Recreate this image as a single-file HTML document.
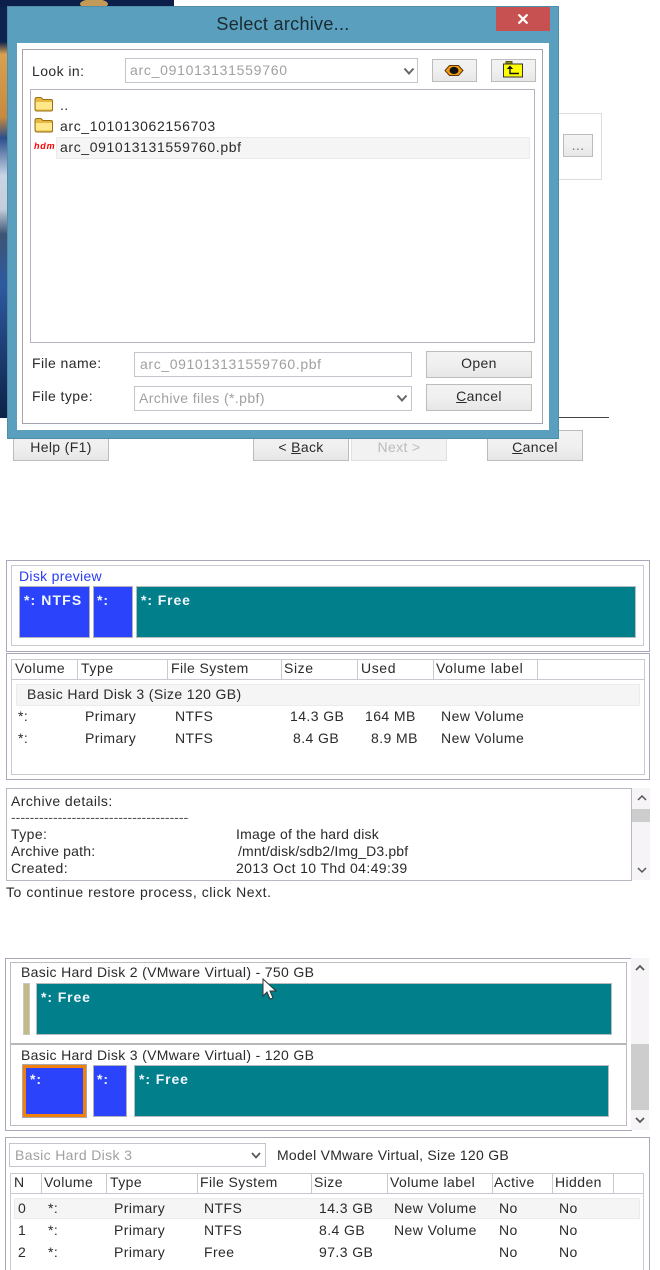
<!DOCTYPE html>
<html><head><meta charset="utf-8">
<style>
html,body{margin:0;padding:0;background:#fff}
#p{position:relative;width:660px;height:1270px;overflow:hidden;background:#fff;font-family:"Liberation Sans",sans-serif;color:#2a2a2a;font-size:14px;filter:blur(.3px)}
#p div,#p svg{position:absolute;box-sizing:border-box}
.t{white-space:nowrap;line-height:16px;height:16px;letter-spacing:.42px;margin-top:-1px}
.g{color:#a0a0a0}
.b{border:1px solid #b4b4c0;background:#fff}
.f{border:1px solid #c4c4cc;background:#fff}
.bt{border:1px solid #bcbcbc;background:linear-gradient(#f2f2f2,#f0f0f0 50%,#e6e6e6);text-align:center;line-height:20px;white-space:nowrap;letter-spacing:.35px}
.o{border:1px solid #a9a9ba;background:#fff}
.in{border:1px solid #c9c9d0;background:#fff}
.blue{background:#2a43fb;border:1px solid #b0b0b8}
.teal{background:#017f8a;border:1px solid #b8bcc0}
.w{color:#f2f6ff;font-weight:bold;letter-spacing:.9px;font-size:14px}
.sep{width:1px;background:#c9c9d2}
.h{letter-spacing:.6px}
u{text-decoration:underline}
</style></head><body><div id="p">

<svg style="left:0;top:0" width="174" height="418" viewBox="0 0 174 418">
<defs><linearGradient id="s" x1="0" y1="0" x2="0" y2="1"><stop offset="0" stop-color="#0d2450"/><stop offset=".1" stop-color="#0d2450"/><stop offset=".13" stop-color="#d8a050"/><stop offset=".28" stop-color="#c88a3c"/><stop offset=".33" stop-color="#2c4f8c"/><stop offset=".42" stop-color="#c8d4e4"/><stop offset=".5" stop-color="#c4cedc"/><stop offset=".56" stop-color="#3f5474"/><stop offset=".68" stop-color="#2e5aa0"/><stop offset=".85" stop-color="#1c3c70"/><stop offset="1" stop-color="#0c2248"/></linearGradient></defs>
<rect width="174" height="418" fill="url(#s)"/>
<rect width="174" height="7" fill="#0c1f4a"/>
<ellipse cx="94" cy="4" rx="14" ry="5" fill="#c49a58"/>
</svg>

<div class="f" style="left:540px;top:113px;width:62px;height:67px;border-color:#dcdcdc"></div>
<div class="bt" style="left:563px;top:134px;width:30px;height:23px;color:#777">...</div>
<div style="left:550px;top:417px;width:59px;height:1px;background:#444"></div>

<div class="bt" style="left:13px;top:430px;width:96px;height:31px;line-height:32px">Help (F1)</div>
<div class="bt" style="left:253px;top:430px;width:96px;height:31px;line-height:32px">&lt; <u>B</u>ack</div>
<div class="bt" style="left:351px;top:430px;width:96px;height:31px;line-height:32px;color:#bbb;background:#f2f2f2;border-color:#e0e0e0">Next &gt;</div>
<div class="bt" style="left:487px;top:430px;width:96px;height:31px;line-height:32px"><u>C</u>ancel</div>

<div style="left:7px;top:6px;width:552px;height:433px;background:#5aa0be;border:1px solid #4e8ea8"></div>
<div class="t" style="left:183px;top:14px;margin-top:0;width:200px;text-align:center;font-size:18px;height:20px;line-height:20px;color:#1a2a30;letter-spacing:.3px">Select archive...</div>
<div style="left:496px;top:7px;width:54px;height:24px;background:#c75050"></div>
<svg style="left:517px;top:14px" width="12" height="10" viewBox="0 0 12 10"><path d="M1.500 .5 10.500 9.500M10.500 .5 1.500 9.500" stroke="#fff" stroke-width="2.200" fill="none"/></svg>
<div style="left:17px;top:43px;width:532px;height:387px;background:#fff"></div>
<div style="left:22px;top:49px;width:521px;height:375px;border:1px solid #a4a4b0;background:#fff"></div>

<div class="t" style="left:32px;top:64px">Look in:</div>
<div class="f" style="left:125px;top:58px;width:293px;height:25px"></div>
<div class="t g" style="left:130px;top:63px;letter-spacing:.72px">arc_091013131559760</div>
<svg style="left:403px;top:67px" width="12" height="9" viewBox="0 0 12 9"><path d="M1.500 1.500 6 6.500 10.500 1.500" stroke="#666" stroke-width="2" fill="none"/></svg>

<div class="bt" style="left:432px;top:59px;width:45px;height:23px"></div>
<svg style="left:444px;top:64px" width="20" height="13" viewBox="0 0 20 13"><path d="M1 6.500 5.500 1.500H14.500L19 6.500 14.500 11.500H5.500Z" fill="#f59a10" stroke="#5a3a10"/><ellipse cx="10" cy="6.500" rx="4.500" ry="3.600" fill="#111"/></svg>
<div class="bt" style="left:491px;top:59px;width:45px;height:23px"></div>
<svg style="left:503px;top:60px" width="21" height="18" viewBox="0 0 21 18"><path d="M3 4V1.500H9V4" fill="#8a8410" stroke="#5a5810"/><rect x=".5" y="4" width="19" height="13" fill="#ffff00" stroke="#333"/><path d="M7 5.500 3.800 9H10.200Z" fill="#111"/><path d="M7 8.500V13.500H16" stroke="#111" stroke-width="1.400" fill="none"/></svg>

<div class="b" style="left:30px;top:89px;width:505px;height:254px"></div>
<svg style="left:34px;top:96px" width="20" height="16" viewBox="0 0 20 16"><path d="M1 3.500Q1 1.500 3 1.500H7L9 3.500H17Q18.500 3.500 18.500 5V13.500Q18.500 15 17 15H3Q1 15 1 13Z" fill="#e8b840" stroke="#96701a"/><path d="M1.800 6H18V13Q18 13.500 17 13.500H3Q2 13.500 1.800 13Z" fill="#ffe78a"/></svg>
<div class="t" style="left:60px;top:98px">..</div>
<svg style="left:34px;top:117px" width="20" height="16" viewBox="0 0 20 16"><path d="M1 3.500Q1 1.500 3 1.500H7L9 3.500H17Q18.500 3.500 18.500 5V13.500Q18.500 15 17 15H3Q1 15 1 13Z" fill="#e8b840" stroke="#96701a"/><path d="M1.800 6H18V13Q18 13.500 17 13.500H3Q2 13.500 1.800 13Z" fill="#ffe78a"/></svg>
<div class="t" style="left:60px;top:119px;letter-spacing:.62px">arc_101013062156703</div>
<div class="t" style="left:34px;top:139px;font-size:9px;color:#f00;font-style:italic;font-weight:bold;letter-spacing:.8px">hdm</div>
<div style="left:56px;top:137px;width:474px;height:22px;background:#f5f5f5;border:1px solid #ebebeb"></div>
<div class="t" style="left:60px;top:140px;letter-spacing:.62px">arc_091013131559760.pbf</div>

<div class="t" style="left:32px;top:356px">File name:</div>
<div class="f" style="left:134px;top:352px;width:278px;height:25px"></div>
<div class="t g" style="left:140px;top:357px;letter-spacing:.62px">arc_091013131559760.pbf</div>
<div class="t" style="left:32px;top:389px">File type:</div>
<div class="f" style="left:134px;top:386px;width:278px;height:25px"></div>
<div class="t g" style="left:139px;top:391px;letter-spacing:.4px">Archive files (*.pbf)</div>
<svg style="left:396px;top:394px" width="12" height="9" viewBox="0 0 12 9"><path d="M1.500 1.500 6 6.500 10.500 1.500" stroke="#666" stroke-width="2" fill="none"/></svg>
<div class="bt" style="left:426px;top:351px;width:106px;height:27px;line-height:22px">Open</div>
<div class="bt" style="left:426px;top:384px;width:106px;height:27px;line-height:23px"><u>C</u>ancel</div>

<div class="o" style="left:6px;top:560px;width:644px;height:92px"></div>
<div class="in" style="left:11px;top:565px;width:633px;height:81px"></div>
<div class="t" style="left:19px;top:569px;color:#2a3cf0;letter-spacing:.3px">Disk preview</div>
<div class="blue" style="left:19px;top:586px;width:71px;height:52px"></div>
<div class="blue" style="left:93px;top:586px;width:40px;height:52px"></div>
<div class="teal" style="left:136px;top:586px;width:500px;height:52px"></div>
<div class="t w" style="left:24px;top:593px;letter-spacing:1.1px">*: NTFS</div>
<div class="t w" style="left:97px;top:593px">*:</div>
<div class="t w" style="left:141px;top:593px">*: Free</div>

<div class="o" style="left:6px;top:653px;width:644px;height:127px"></div>
<div class="in" style="left:11px;top:659px;width:634px;height:116px"></div>
<div style="left:11px;top:679px;width:634px;height:1px;background:#c9c9d2"></div>
<div class="sep" style="left:77px;top:659px;height:20px"></div>
<div class="sep" style="left:167px;top:659px;height:20px"></div>
<div class="sep" style="left:281px;top:659px;height:20px"></div>
<div class="sep" style="left:357px;top:659px;height:20px"></div>
<div class="sep" style="left:433px;top:659px;height:20px"></div>
<div class="sep" style="left:537px;top:659px;height:20px"></div>
<div class="t h" style="left:15px;top:661px">Volume</div>
<div class="t h" style="left:81px;top:661px">Type</div>
<div class="t" style="left:171px;top:661px">File System</div>
<div class="t h" style="left:284px;top:661px">Size</div>
<div class="t h" style="left:361px;top:661px">Used</div>
<div class="t h" style="left:436px;top:661px">Volume label</div>
<div style="left:16px;top:684px;width:624px;height:22px;background:#f5f5f5;border:1px solid #ececec"></div>
<div class="t" style="left:27px;top:687px;letter-spacing:.37px">Basic Hard Disk 3 (Size 120 GB)</div>
<div class="t" style="left:18px;top:709px">*:</div><div class="t" style="left:85px;top:709px">Primary</div><div class="t" style="left:175px;top:709px">NTFS</div><div class="t" style="left:290px;top:709px">14.3 GB</div><div class="t" style="left:365px;top:709px">164 MB</div><div class="t" style="left:441px;top:709px;letter-spacing:.47px">New Volume</div>
<div class="t" style="left:18px;top:731px">*:</div><div class="t" style="left:85px;top:731px">Primary</div><div class="t" style="left:175px;top:731px">NTFS</div><div class="t" style="left:293px;top:731px">8.4 GB</div><div class="t" style="left:371px;top:731px">8.9 MB</div><div class="t" style="left:441px;top:731px;letter-spacing:.47px">New Volume</div>

<div class="o" style="left:6px;top:788px;width:626px;height:93px;border-color:#b8b8c4"></div>
<div class="t" style="left:11px;top:794px">Archive details:</div>
<div class="t" style="left:11px;top:810px;letter-spacing:0;width:178px;overflow:hidden;color:#555">----------------------------------------------</div>
<div class="t" style="left:11px;top:827px">Type:</div><div class="t" style="left:236px;top:827px;letter-spacing:.2px">Image of the hard disk</div>
<div class="t" style="left:11px;top:844px;letter-spacing:.2px">Archive path:</div><div class="t" style="left:238px;top:844px;letter-spacing:.15px">/mnt/disk/sdb2/Img_D3.pbf</div>
<div class="t" style="left:11px;top:861px">Created:</div><div class="t" style="left:236px;top:861px;letter-spacing:.38px">2013 Oct 10 Thd 04:49:39</div>
<div style="left:632px;top:788px;width:18px;height:92px;background:#f7f4f8"></div>
<div style="left:632px;top:809px;width:18px;height:13px;background:#cdcdcd"></div>
<svg style="left:637px;top:794px" width="10" height="8" viewBox="0 0 10 8"><path d="M1 6 5 2 9 6" stroke="#555" stroke-width="1.500" fill="none"/></svg>
<svg style="left:637px;top:866px" width="10" height="8" viewBox="0 0 10 8"><path d="M1 2 5 6 9 2" stroke="#555" stroke-width="1.500" fill="none"/></svg>
<div class="t" style="left:6px;top:885px;letter-spacing:.55px">To continue restore process, click Next.</div>

<div class="o" style="left:5px;top:958px;width:627px;height:173px"></div>
<div class="in" style="left:10px;top:962px;width:617px;height:83px;border-color:#bcbcbc"></div>
<div class="in" style="left:10px;top:1044px;width:617px;height:82px;border-color:#bcbcbc"></div>
<div style="left:10px;top:1043px;width:617px;height:2px;background:#b8b8b8"></div>
<div class="t" style="left:21px;top:965px;letter-spacing:.33px">Basic Hard Disk 2 (VMware Virtual) - 750 GB</div>
<div style="left:23px;top:983px;width:7px;height:52px;background:#c3bb82;border:1px solid #c8c8c8"></div>
<div class="teal" style="left:36px;top:983px;width:576px;height:52px"></div>
<div class="t w" style="left:41px;top:990px">*: Free</div>
<div class="t" style="left:21px;top:1048px;letter-spacing:.33px">Basic Hard Disk 3 (VMware Virtual) - 120 GB</div>
<div style="left:23px;top:1065px;width:63px;height:52px;background:#2a43fb;border:3px solid #f08010;outline:1px solid #aaa"></div>
<div class="blue" style="left:93px;top:1065px;width:34px;height:52px"></div>
<div class="teal" style="left:134px;top:1065px;width:475px;height:52px"></div>
<div class="t w" style="left:30px;top:1072px">*:</div>
<div class="t w" style="left:97px;top:1072px">*:</div>
<div class="t w" style="left:139px;top:1072px">*: Free</div>
<div style="left:631px;top:958px;width:18px;height:172px;background:#f7f4f8"></div>
<div style="left:631px;top:1044px;width:18px;height:66px;background:#cdcdcd"></div>
<svg style="left:635px;top:964px" width="10" height="8" viewBox="0 0 10 8"><path d="M1 6 5 2 9 6" stroke="#555" stroke-width="1.700" fill="none"/></svg>
<svg style="left:635px;top:1116px" width="10" height="8" viewBox="0 0 10 8"><path d="M1 2 5 6 9 2" stroke="#555" stroke-width="1.700" fill="none"/></svg>
<svg style="left:262px;top:978px" width="16" height="24" viewBox="0 0 16 24"><path d="M1 1V18L5 14 8 21 11 20 8 13H14Z" fill="#fff" stroke="#333"/></svg>

<div class="o" style="left:5px;top:1137px;width:645px;height:140px"></div>
<div class="f" style="left:9px;top:1143px;width:257px;height:24px"></div>
<div class="t g" style="left:15px;top:1148px;letter-spacing:.35px">Basic Hard Disk 3</div>
<svg style="left:250px;top:1151px" width="12" height="9" viewBox="0 0 12 9"><path d="M2 2 6 6.500 10 2" stroke="#555" stroke-width="1.700" fill="none"/></svg>
<div class="t" style="left:277px;top:1148px;letter-spacing:.27px">Model VMware Virtual, Size 120 GB</div>
<div class="in" style="left:10px;top:1173px;width:634px;height:110px"></div>
<div style="left:10px;top:1193px;width:634px;height:1px;background:#c9c9d2"></div>
<div class="sep" style="left:41px;top:1173px;height:20px"></div>
<div class="sep" style="left:106px;top:1173px;height:20px"></div>
<div class="sep" style="left:197px;top:1173px;height:20px"></div>
<div class="sep" style="left:311px;top:1173px;height:20px"></div>
<div class="sep" style="left:387px;top:1173px;height:20px"></div>
<div class="sep" style="left:492px;top:1173px;height:20px"></div>
<div class="sep" style="left:552px;top:1173px;height:20px"></div>
<div class="sep" style="left:613px;top:1173px;height:20px"></div>
<div class="t" style="left:14px;top:1175px">N</div><div class="t" style="left:44px;top:1175px">Volume</div><div class="t" style="left:110px;top:1175px">Type</div><div class="t" style="left:200px;top:1175px">File System</div><div class="t" style="left:314px;top:1175px">Size</div><div class="t" style="left:390px;top:1175px">Volume label</div><div class="t" style="left:494px;top:1175px">Active</div><div class="t" style="left:555px;top:1175px">Hidden</div>
<div style="left:14px;top:1198px;width:626px;height:21px;background:#f5f5f5;border:1px solid #ececec"></div>
<div class="t" style="left:18px;top:1201px">0</div><div class="t" style="left:48px;top:1201px">*:</div><div class="t" style="left:114px;top:1201px">Primary</div><div class="t" style="left:204px;top:1201px">NTFS</div><div class="t" style="left:319px;top:1201px">14.3 GB</div><div class="t" style="left:394px;top:1201px">New Volume</div><div class="t" style="left:499px;top:1201px">No</div><div class="t" style="left:559px;top:1201px">No</div>
<div class="t" style="left:18px;top:1223px">1</div><div class="t" style="left:48px;top:1223px">*:</div><div class="t" style="left:114px;top:1223px">Primary</div><div class="t" style="left:204px;top:1223px">NTFS</div><div class="t" style="left:319px;top:1223px">8.4 GB</div><div class="t" style="left:394px;top:1223px">New Volume</div><div class="t" style="left:499px;top:1223px">No</div><div class="t" style="left:559px;top:1223px">No</div>
<div class="t" style="left:18px;top:1245px">2</div><div class="t" style="left:48px;top:1245px">*:</div><div class="t" style="left:114px;top:1245px">Primary</div><div class="t" style="left:204px;top:1245px">Free</div><div class="t" style="left:319px;top:1245px">97.3 GB</div><div class="t" style="left:499px;top:1245px">No</div><div class="t" style="left:559px;top:1245px">No</div>

</div></body></html>
